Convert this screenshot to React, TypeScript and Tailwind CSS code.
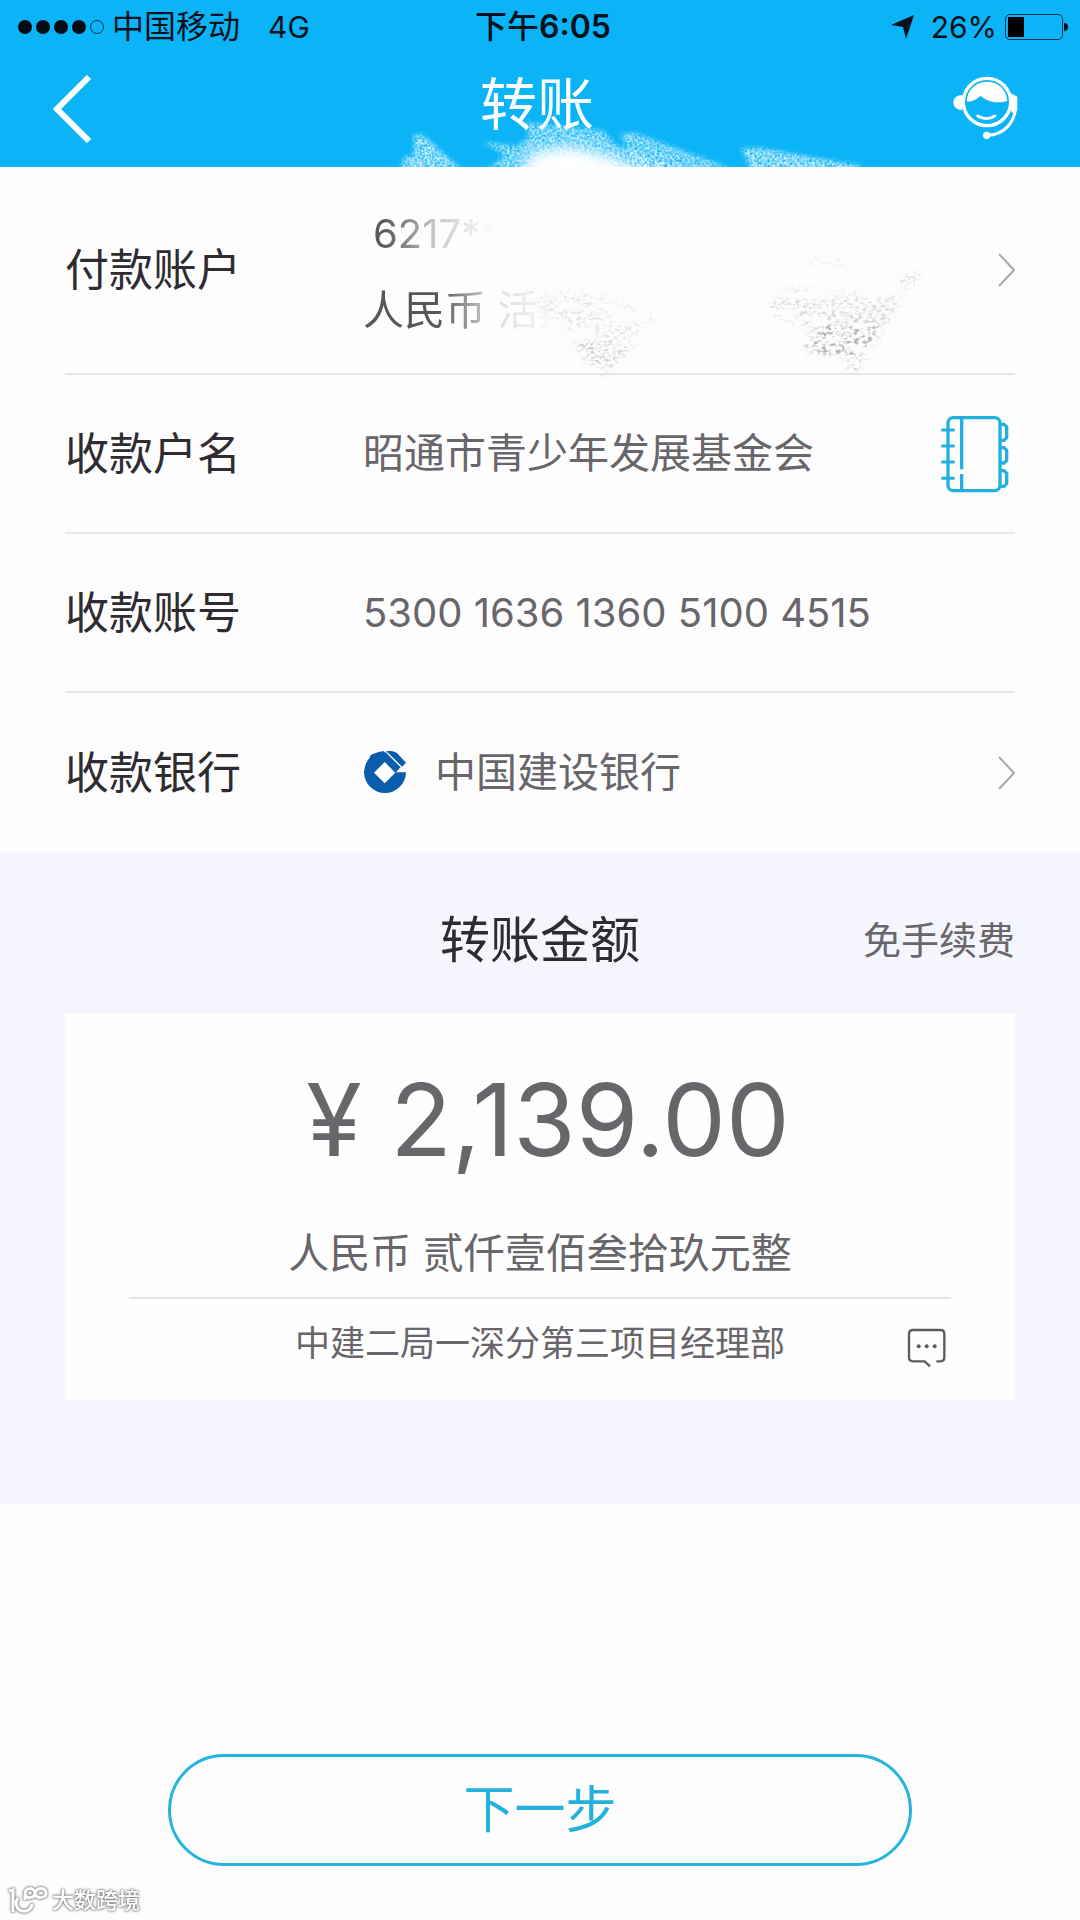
import { ReactNode, useState } from "react";

interface RowProps {
    label: string;
    htmlFor?: string;
    tall?: boolean;
    last?: boolean;
    children: ReactNode;
}

function Row({ label, htmlFor, tall, last, children }: RowProps) {
    return (
        <div
            className={`flex items-center ${tall ? "h-52" : "h-[159px]"} ${last ? "" : "border-b-2 border-[#e6e6ec]"}`}
        >
            <label htmlFor={htmlFor} className="w-[298px] shrink-0 text-[44px] text-[#2e2c30]">
                {label}
            </label>
            {children}
        </div>
    );
}

function ChevronRight() {
    return (
        <svg viewBox="0 0 18 36" className="h-9 w-[18px] shrink-0" fill="none" stroke="#a9a9ae" strokeWidth="2">
            <path d="M2 2 L17 18 L2 34" />
        </svg>
    );
}

function ServiceIcon() {
    return (
        <svg viewBox="60 70 210 210" className="size-[70px]" fill="none" stroke="#fff" strokeLinecap="round">
            <circle cx="168" cy="154" r="71" strokeWidth="10" />
            <path
                d="M107 152 C109 114 138 93 168 93 C200 93 226 114 229 150 C206 159 172 156 148 135 C138 146 124 154 107 152 Z"
                fill="#fff"
                stroke="none"
            />
            <path d="M94 133 C58 132 58 180 94 178 Z" fill="#fff" stroke="none" />
            <path d="M240 128 L259 138 V176 L250 192 L240 180 Z" fill="#fff" stroke="none" />
            <path d="M254 171 C250 218 218 252 170 254" strokeWidth="9" />
            <circle cx="167" cy="254" r="11" fill="#fff" stroke="none" />
            <path d="M140 196 Q166 212 192 196" strokeWidth="8" />
        </svg>
    );
}

function ContactsIcon() {
    return (
        <svg viewBox="124 102 210 240" className="h-20 w-[70px]" fill="none" stroke="#22b0dc" strokeWidth="10">
            <rect x="145" y="113" width="156" height="219" rx="16" />
            <path d="M186 113 V268 M186 282 V332" />
            <path d="M125 150 H165 M125 198 H165 M125 246 H165 M125 295 H165" strokeWidth="9" />
            <path d="M302 133 H313 L321 141 V173 L313 181 H302" />
            <path d="M302 203 H313 L321 211 V241 L313 249 H302" />
            <path d="M302 272 H313 L321 280 V311 L313 319 H302" />
        </svg>
    );
}

function BankLogo() {
    return (
        <svg viewBox="66 82 132 132" className="size-11 shrink-0">
            <circle cx="132" cy="145" r="63" fill="#0a5cad" />
            <path d="M163 146 L174 134 L134 94 L126 76 L200 76 L204 146 Z" fill="#fdfdfe" />
            <path d="M84 92 L134 86 L179 131 L163 147 L131 115 L98 147 Z" fill="#0a5cad" />
            <path d="M131 115 L163 147 L131 179 L99 147 Z" fill="#fff" />
            <path d="M134 84 Q152 78 168 88 L195 117 L183 129 L141 87 Z" fill="#0a5cad" />
            <path d="M66 78 H126 Q78 84 69 140 L66 150 Z" fill="#fdfdfe" />
        </svg>
    );
}

function MessageIcon() {
    return (
        <svg viewBox="140 84 120 126" className="h-[42px] w-10" fill="none" stroke="#5c5c60" strokeWidth="7">
            <path d="M228 187 H240 Q252 187 252 175 V105 Q252 93 240 93 H158 Q146 93 146 105 V175 Q146 187 158 187 H193 L209 202" />
            <g fill="#5c5c60" stroke="none">
                <circle cx="175" cy="142" r="6" />
                <circle cx="199" cy="142" r="6" />
                <circle cx="223" cy="142" r="6" />
            </g>
        </svg>
    );
}

// Eraser strokes that hide the payer's card number
function EraserMarks() {
    return (
        <svg
            viewBox="390 110 550 270"
            className="pointer-events-none absolute top-[110px] left-[390px] h-[270px] w-[550px]"
            aria-hidden="true"
        >
            <defs>
                <filter id="chalk" x="-10%" y="-20%" width="120%" height="140%">
                    <feTurbulence type="fractalNoise" baseFrequency="0.4" numOctaves="3" seed="4" result="n" />
                    <feColorMatrix in="n" values="0 0 0 0 1  0 0 0 0 1  0 0 0 0 1  2 0 0 0 -0.4" result="grain" />
                    <feGaussianBlur in="SourceGraphic" stdDeviation="2" result="soft" />
                    <feComposite in="grain" in2="soft" operator="in" />
                </filter>
                <filter id="dust" x="-20%" y="-20%" width="140%" height="140%">
                    <feTurbulence type="fractalNoise" baseFrequency="0.22 0.34" numOctaves="3" seed="9" result="n" />
                    <feColorMatrix in="n" values="0 0 0 0 0.42  0 0 0 0 0.41  0 0 0 0 0.43  4 0 0 0 -1.8" result="grain" />
                    <feTurbulence type="fractalNoise" baseFrequency="0.03 0.09" numOctaves="3" seed="3" result="m" />
                    <feColorMatrix in="m" values="0 0 0 0 1  0 0 0 0 1  0 0 0 0 1  0 4 0 0 -1.2" result="patches" />
                    <feGaussianBlur in="SourceGraphic" stdDeviation="3" result="soft" />
                    <feComposite in="grain" in2="patches" operator="in" result="patchy" />
                    <feComposite in="patchy" in2="soft" operator="in" />
                </filter>
                <filter id="soft" x="-20%" y="-50%" width="140%" height="200%">
                    <feGaussianBlur stdDeviation="7" />
                </filter>
                <clipPath id="aboveLine">
                    <rect x="390" y="110" width="550" height="57" />
                </clipPath>
            </defs>
            <g clipPath="url(#aboveLine)">
                <g filter="url(#chalk)" fill="#fff">
                    <path d="M414 134 L424 136 L462 170 H400 L404 157 L414 156 Z" fillOpacity="0.8" />
                    <path
                        d="M482 142 L518 146 L530 134 L522 122 L560 126 L602 130 L618 146 L680 168 L730 172 H484 L505 155 Z"
                        fillOpacity="0.7"
                    />
                    <path d="M620 134 L636 133 L730 168 L640 172 Z" fillOpacity="0.7" />
                    <path d="M741 148 L760 148 L862 166 L856 172 H752 Z" fillOpacity="0.8" />
                </g>
                <path d="M516 180 L532 152 L570 146 L610 156 L664 180 Z" fill="#fff" filter="url(#soft)" />
            </g>
            <g filter="url(#dust)">
                <path d="M520 290 L600 292 L658 318 L632 350 L604 374 L596 366 L575 348 L560 325 Z" fillOpacity="0.3" />
                <path d="M572 338 L606 340 L630 348 L602 376 L592 374 Z" fillOpacity="0.45" />
                <path d="M765 312 L785 288 L904 298 L880 336 L854 372 L838 358 L802 352 L812 330 Z" fillOpacity="0.45" />
                <path d="M825 322 L882 324 L856 372 L840 360 L804 350 Z" fillOpacity="0.9" />
                <path d="M896 280 L918 270 L918 284 L902 288 Z" fillOpacity="0.6" />
                <path d="M806 256 L850 262 L846 270 L812 266 Z" fillOpacity="0.2" />
            </g>
        </svg>
    );
}

function StatusBar() {
    return (
        <div className="grid h-[54px] grid-cols-[1fr_auto_1fr] items-center pr-3 pl-[18px] text-[32px] leading-none text-[#07121c]">
            <div className="flex items-center">
                <div className="flex gap-1">
                    {[0, 1, 2, 3].map((i) => (
                        <span key={i} className="size-[14px] rounded-full bg-[#050b12]" />
                    ))}
                    <span className="size-[14px] rounded-full border border-[#07304a]" />
                </div>
                <span className="ml-2">中国移动</span>
                <span className="ml-7 text-[30px]">4G</span>
            </div>
            <span className="font-medium">
                下午<span className="font-semibold">6:05</span>
            </span>
            <div className="flex items-center justify-end">
                <svg viewBox="0 0 24 24" className="size-6" fill="#07121c">
                    <path d="M23 0 L15 24 L12 12 L0 10 Z" />
                </svg>
                <span className="ml-4 text-[30px]">26%</span>
                <div className="ml-2 flex h-[26px] w-[58px] rounded-[5px] border border-[#07304a] p-0.5">
                    <span className="w-4 bg-black" />
                </div>
                <span className="ml-px h-2 w-1 rounded-r-full bg-[#07121c]" />
            </div>
        </div>
    );
}

function Watermark() {
    return (
        <div className="flex items-center gap-1 pl-2 text-white [filter:drop-shadow(0_0_1px_#777)_drop-shadow(0_0_1px_#999)]">
            <svg viewBox="0 0 40 28" className="h-7 w-10" fill="none" stroke="#fff" strokeWidth="3">
                <path d="M1 5 L5 4 V26" />
                <path d="M10 12 A8 8 0 1 0 24 18" />
                <path d="M17 14 V8 C17 1 26 1 27 7 C28 13 38 13 38 7 C38 1 29 1 27 7 C26 13 18 13 17 8" />
            </svg>
            <span className="text-[22px] leading-7 font-medium">大数跨境</span>
        </div>
    );
}

export default function App() {
    const [payee, setPayee] = useState("昭通市青少年发展基金会");
    const [account, setAccount] = useState("5300 1636 1360 5100 4515");
    const [amount, setAmount] = useState("¥ 2,139.00");
    const [memo, setMemo] = useState("中建二局一深分第三项目经理部");

    return (
        <div className="relative flex min-h-screen flex-col bg-[#fdfdfe] font-['Inter','Noto_Sans_CJK_SC',sans-serif] text-[#68666a]">
            <header className="bg-[#0bb4f7] pb-1">
                <StatusBar />
                <div className="grid h-[109px] grid-cols-[1fr_auto_1fr] items-center pr-[59px] pl-[53px]">
                    <button type="button" aria-label="返回" className="justify-self-start">
                        <svg viewBox="2 0 42 68" className="h-[68px] w-[42px]" fill="none" stroke="#fff" strokeWidth="6">
                            <path d="M38 2 L6 34 L38 66" />
                        </svg>
                    </button>
                    <h1 className="pb-2 text-[57px] leading-none text-white">转账</h1>
                    <button type="button" aria-label="客服" className="justify-self-end">
                        <ServiceIcon />
                    </button>
                </div>
            </header>

            {/* Payer and payee */}
            <section className="px-[65px]">
                <Row label="付款账户" htmlFor="payer" tall>
                    <button
                        id="payer"
                        type="button"
                        className="flex flex-1 items-center justify-between text-left text-[41px] leading-[77px]"
                    >
                        <span className="flex flex-col items-start pt-1">
                            <span className="bg-linear-to-r from-[#58565a] from-15% via-[#c4c3c6] via-50% to-[#fdfdfe] to-95% bg-clip-text pl-2.5 text-[40px] text-transparent">
                                6217**
                            </span>
                            <span className="bg-linear-to-r from-[#58565a] from-35% via-[#dadadd] via-60% to-[#fdfdfe] to-90% bg-clip-text text-transparent">
                                人民币 活期
                            </span>
                        </span>
                        <ChevronRight />
                    </button>
                </Row>
                <Row label="收款户名" htmlFor="payee">
                    <input
                        id="payee"
                        className="min-w-0 flex-1 bg-transparent text-[41px] outline-none"
                        value={payee}
                        onChange={(e) => setPayee(e.target.value)}
                    />
                    <button type="button" aria-label="通讯录" className="mr-1">
                        <ContactsIcon />
                    </button>
                </Row>
                <Row label="收款账号" htmlFor="account">
                    <input
                        id="account"
                        className="min-w-0 flex-1 bg-transparent text-[40px] outline-none"
                        value={account}
                        onChange={(e) => setAccount(e.target.value)}
                    />
                </Row>
                <Row label="收款银行" htmlFor="bank" last>
                    <button id="bank" type="button" className="flex flex-1 items-center text-left text-[41px]">
                        <BankLogo />
                        <span className="ml-7 flex-1">中国建设银行</span>
                        <ChevronRight />
                    </button>
                </Row>
            </section>

            {/* Amount */}
            <section className="bg-[#f5f5fd] px-[65px] pb-[104px]">
                <div className="grid h-[161px] grid-cols-[1fr_auto_1fr] items-center pt-4">
                    <label htmlFor="amount" className="col-start-2 text-[50px] text-[#2e2c30]">
                        转账金额
                    </label>
                    <span className="justify-self-end text-[38px]">免手续费</span>
                </div>
                <div className="bg-[#fefefe] px-16 pt-11 pb-[19px]">
                    <input
                        id="amount"
                        className="h-[126px] w-full bg-transparent pl-4 text-center text-[101px] outline-none"
                        value={amount}
                        onChange={(e) => setAmount(e.target.value)}
                    />
                    <p className="mt-7 text-center text-[41px] leading-[84px]">人民币 贰仟壹佰叁拾玖元整</p>
                    <div className="relative mt-0.5 border-t-2 border-[#e2e2ea]">
                        <input
                            aria-label="附言"
                            className="h-[82px] w-full bg-transparent text-center text-[35px] outline-none"
                            value={memo}
                            onChange={(e) => setMemo(e.target.value)}
                        />
                        <button type="button" aria-label="编辑附言" className="absolute top-7 right-1">
                            <MessageIcon />
                        </button>
                    </div>
                </div>
            </section>

            <footer className="flex flex-1 flex-col justify-end">
                <button
                    type="button"
                    className="mx-[168px] mb-5 h-28 rounded-full border-[3px] border-[#26b3dd] text-[51px] text-[#22b0dc]"
                >
                    下一步
                </button>
                <div className="pb-1.5">
                    <Watermark />
                </div>
            </footer>

            <EraserMarks />
        </div>
    );
}
